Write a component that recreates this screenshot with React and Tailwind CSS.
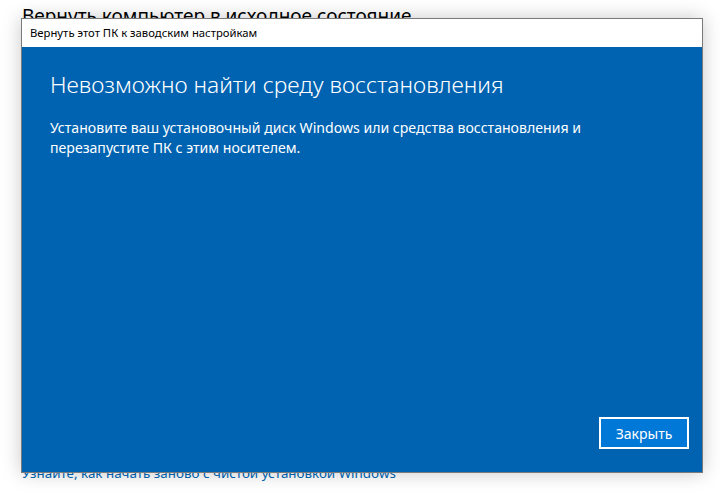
export default function App() {
  return (
    <div
      className="relative h-[496px] w-[721px] overflow-hidden bg-white"
      style={{ fontFamily: '"Noto Sans", "Open Sans", sans-serif' }}
    >
      <div className="px-[22px] pt-[3px] text-[19px] leading-[26px] text-black">
        Вернуть компьютер в исходное состояние
      </div>
      <div className="absolute left-[22px] top-[463px] text-[13.4px] leading-[20px] text-[#0067b8]">
        Узнайте, как начать заново с чистой установкой Windows
      </div>

      <div className="absolute left-[21px] top-[18px] flex h-[455px] w-[682px] flex-col border border-[#7a7a7a] shadow-[0_0_18px_rgba(0,0,0,0.22)]">
        <div className="flex h-[28px] items-center bg-white px-[8px] text-[11.3px] text-black">
          Вернуть этот ПК к заводским настройкам
        </div>
        <div className="flex flex-1 flex-col bg-[#0063b1] px-[28px] pb-[23px] text-white">
          <h1 className="mt-[22px] text-[22.8px] font-light leading-[32px]">
            Невозможно найти среду восстановления
          </h1>
          <p className="mt-[17px] w-[560px] text-[14.1px] leading-[20px]">
            Установите ваш установочный диск Windows или средства восстановления и
            перезапустите ПК с этим носителем.
          </p>
          <div className="mt-auto flex justify-end">
            <button className="mr-[-15px] h-[32px] w-[90px] border-2 border-white bg-[#0078d7] text-[14px] text-white">
              Закрыть
            </button>
          </div>
        </div>
      </div>
    </div>
  )
}
